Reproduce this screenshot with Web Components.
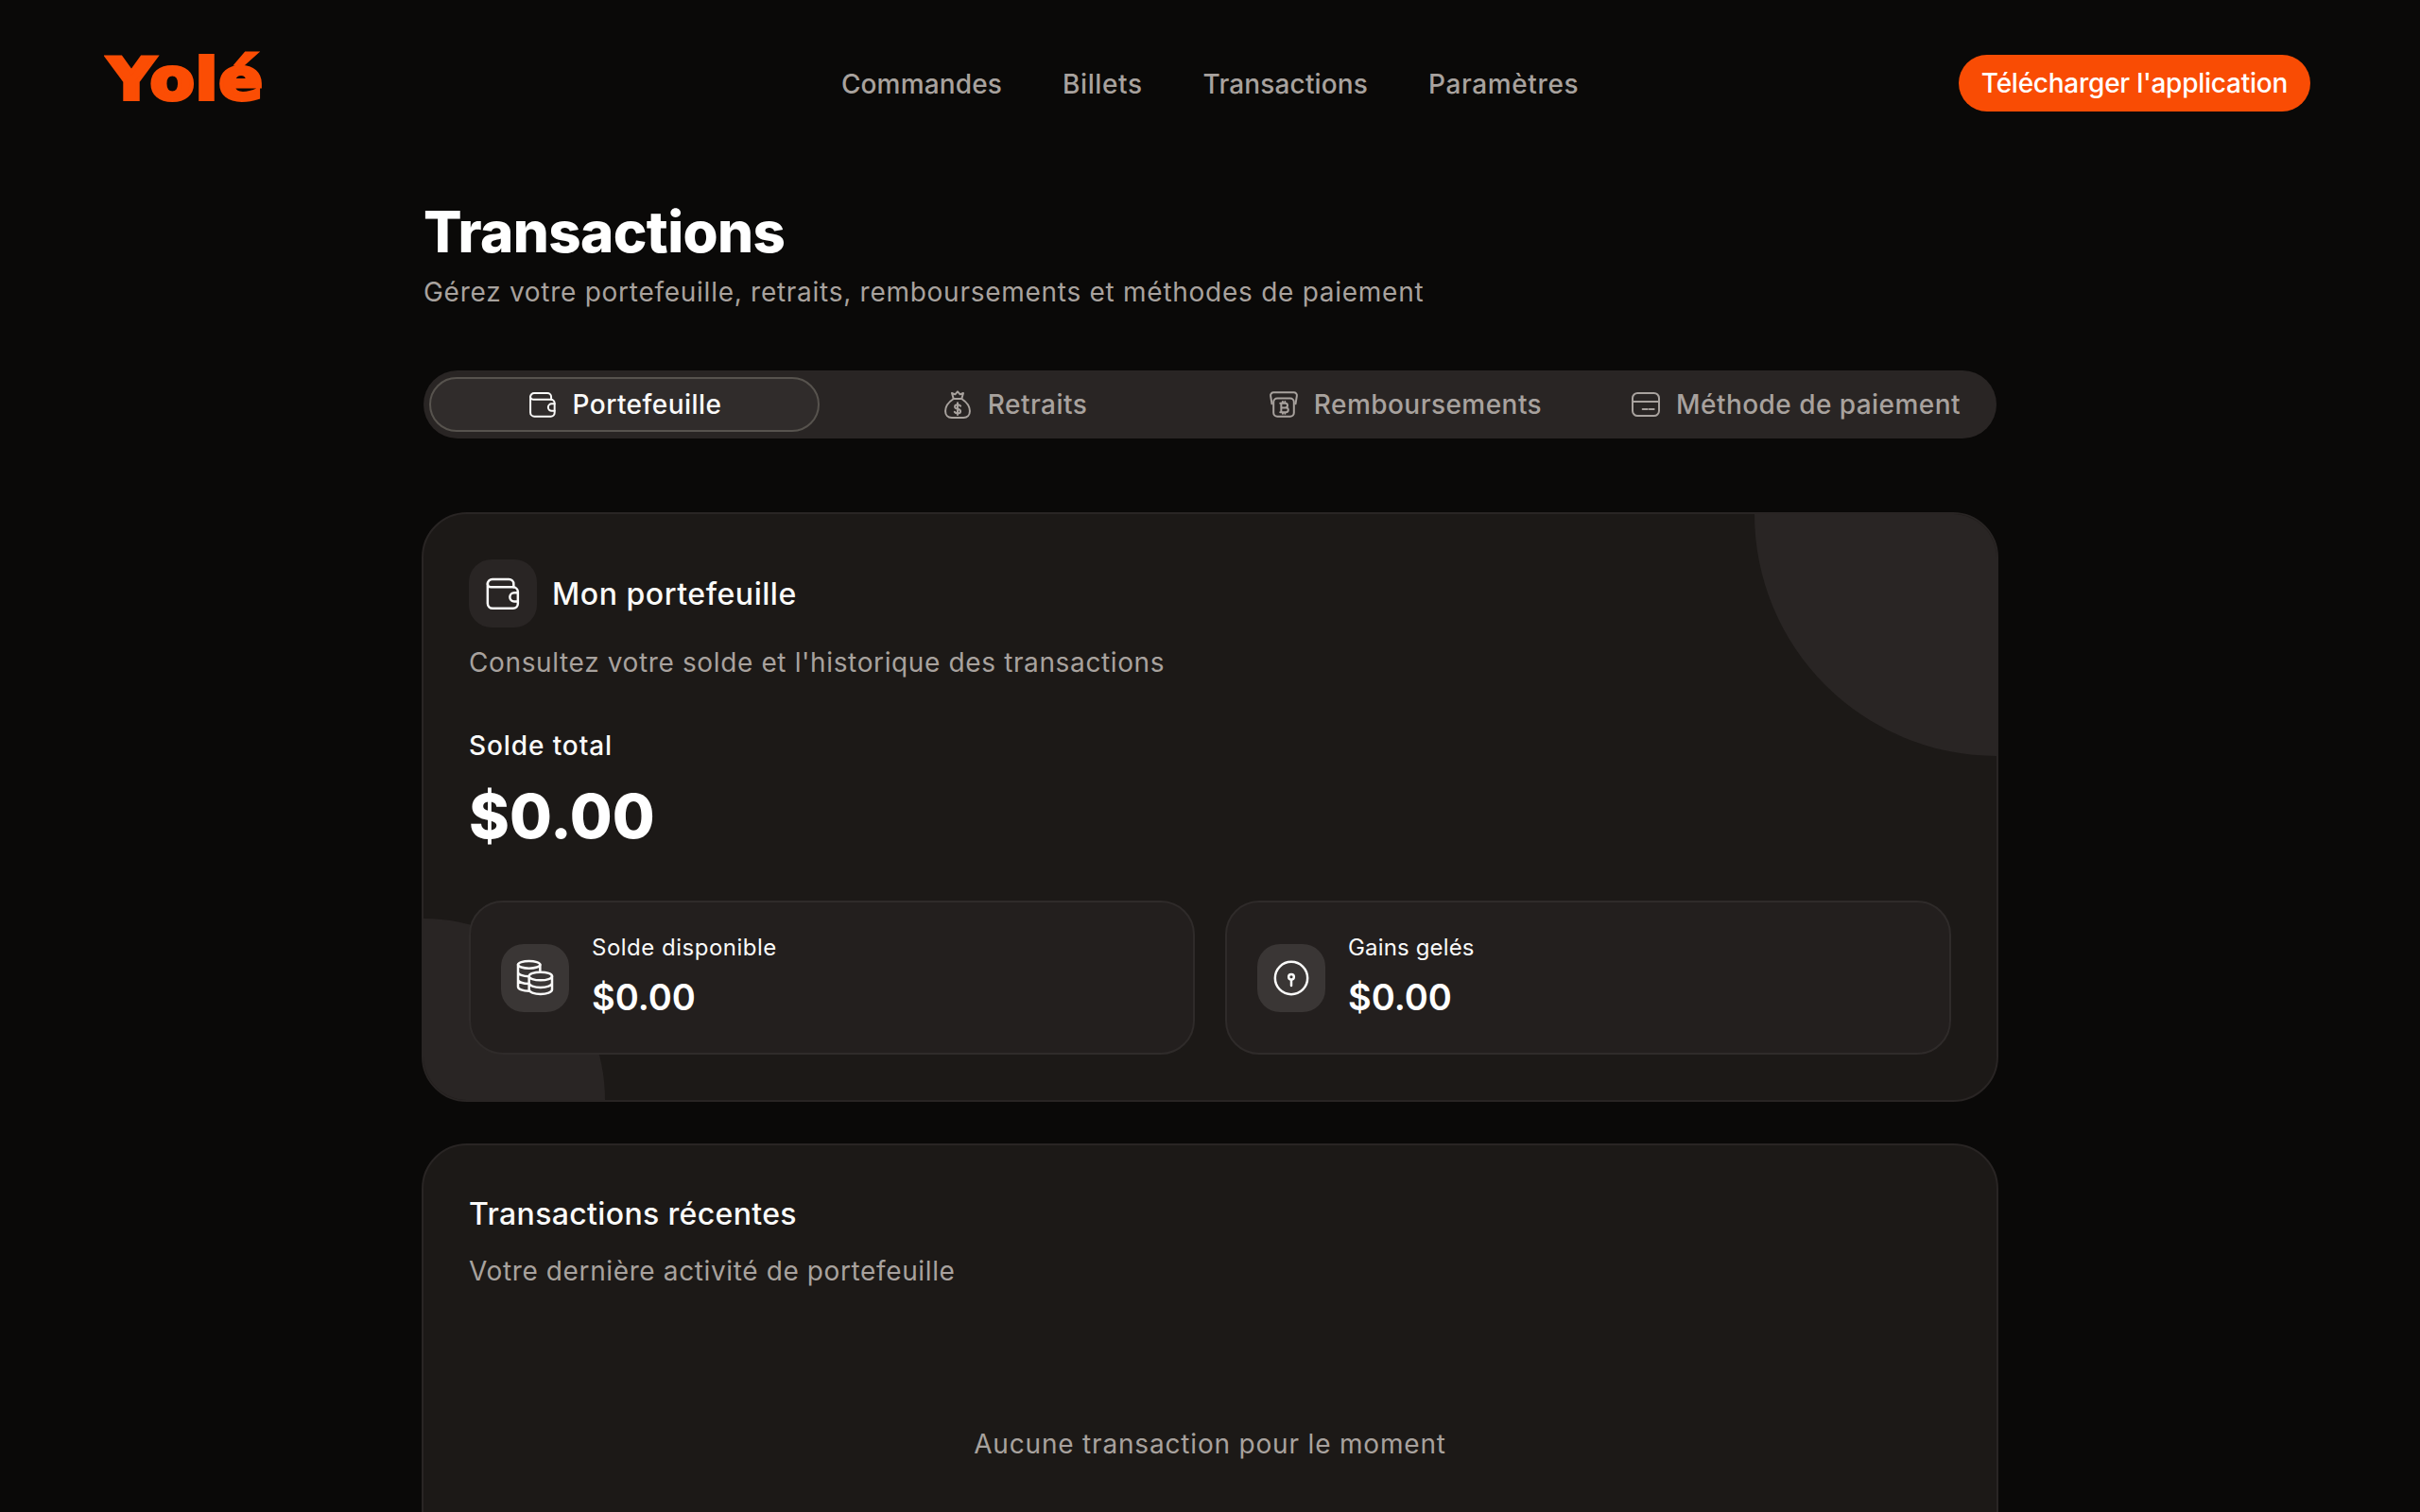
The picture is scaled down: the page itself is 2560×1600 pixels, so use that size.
<!DOCTYPE html>
<html lang="fr"><head><meta charset="utf-8"><title>Transactions</title>
<style>
html,body{margin:0;padding:0;background:#0a0908;height:1600px;overflow:hidden}
body{font-family:Inter,"Noto Sans",sans-serif;color:#fff}
</style></head><body>
<yole-header></yole-header>
<yole-main>
  <yole-heading title="Transactions" sub="Gérez votre portefeuille, retraits, remboursements et méthodes de paiement"></yole-heading>
  <yole-tabs></yole-tabs>
  <yole-wallet></yole-wallet>
  <yole-recent></yole-recent>
</yole-main>
<script>
const ICONS={
wallet:'<path d="M2.300 6a3 3 0 0 1 3-3h10.500a3 3 0 0 1 3 3v2"/><path d="M2.300 6a2.200 2.200 0 0 0 2.200 2h14a3 3 0 0 1 3 3v7.500a3 3 0 0 1-3 3h-13a3.200 3.200 0 0 1-3.200-3.200Z"/><path d="M21.500 11.500h-2.300a2.800 2.800 0 0 0 0 5.600h2.300"/>',
bag:'<path d="M8.800 7.500 7.500 3l2.500 1L12 1.800 14 4l2.500-1-1.300 4.500"/><path d="M8.800 7.500h6.400"/><path d="M8.800 7.500C5 10 2.300 13.500 2.300 17.300c0 3 2 5.200 5 5.200h9.400c3 0 5-2.200 5-5.200 0-3.800-2.700-7.300-6.500-9.800"/><path d="M14.300 13.200c-.5-.8-1.300-1.100-2.300-1.100-1.200 0-2.200.6-2.200 1.700 0 2.400 4.500 1.200 4.500 3.600 0 1.100-1.100 1.700-2.300 1.700-1 0-1.900-.4-2.400-1.200M12 10.700v9.500"/>',
refund:'<path d="M2.600 11.500 1.600 5.200A2.400 2.400 0 0 1 4 2.400h16a2.400 2.400 0 0 1 2.400 2.800l-1 6.300"/><rect x="3.900" y="7.200" width="16.200" height="14.400" rx="3"/><path d="M10 10.800v7.400M9.200 11h4a1.800 1.800 0 0 1 0 3.600h-3.200M10 14.600h3.800a1.800 1.800 0 0 1 0 3.600H9.200M11.200 9.800V11M13 9.800V11M11.200 18.200v1.100M13 18.200v1.100"/>',
card:'<rect x="1.500" y="3" width="21" height="18" rx="4"/><path d="M1.500 9.700h21M9.500 15.700h3.800M14.800 15.700h3.700"/>',
coins:'<ellipse cx="8.200" cy="3.500" rx="7" ry="2.300"/><path d="M15.200 3.500v4M1.200 3.500v14c0 1.600 3.100 2.700 7 2.700M1.200 8.200c0 1.600 3.100 2.700 7 2.700M1.200 12.900c0 1.600 3.100 2.700 7 2.700"/><ellipse cx="15.500" cy="10.800" rx="7.300" ry="2.600"/><path d="M8.200 10.800v8.600c0 1.600 3.300 2.800 7.300 2.800s7.300-1.200 7.300-2.800v-8.600M8.200 15.200c0 1.600 3.300 2.800 7.300 2.800s7.300-1.200 7.300-2.800"/>',
lock:'<circle cx="12" cy="12" r="10.300"/><circle cx="12" cy="11.300" r="1.700"/><path d="M12 13v3.800"/>'
};
function icon(n,s,c,w){return `<svg width="${s}" height="${s}" viewBox="0 0 24 24" fill="none" stroke="${c}" stroke-width="${w||1.5}" stroke-linecap="round" stroke-linejoin="round" aria-hidden="true">${ICONS[n]}</svg>`}
function def(name,fn){customElements.define(name,class extends HTMLElement{connectedCallback(){if(!this.shadowRoot){this.attachShadow({mode:'open'}).innerHTML=fn(this)}}})}
const F='font-family:Inter,"Noto Sans",sans-serif;';
def('yole-header',()=>`<style>
:host{display:grid;grid-template-columns:1fr auto 1fr;align-items:center;height:176px;padding:0 116px 0 112px;box-sizing:border-box;${F}}
.logo{font:700 60px/1 "DejaVu Sans",sans-serif;color:#fb4d04;-webkit-text-stroke:4px #fb4d04;letter-spacing:1px;margin-top:-8px;padding-left:2px;transform:scaleX(1.14);transform-origin:left center}
nav{display:flex;gap:64px;margin:2px 0 0 4px}
a{color:#a8a29e;font-size:28px;font-weight:500;letter-spacing:.15px}
a.w{letter-spacing:.6px}
.b{justify-self:end;height:60px;display:flex;align-items:center;padding:0 24px;border-radius:30px;background:#f94c04;color:#fff;font-size:28px;font-weight:500;letter-spacing:-.25px}
</style><div class="logo">Yolé</div><nav><a>Commandes</a><a class="w">Billets</a><a>Transactions</a><a class="w">Paramètres</a></nav><div class="b">Télécharger l'application</div>`);
def('yole-main',()=>`<style>:host{display:block;width:1664px;margin:0 auto;box-sizing:border-box}</style><slot></slot>`);
def('yole-heading',h=>`<style>:host{display:block;padding-top:33px}
h1{margin:0;font-size:60px;line-height:72px;font-weight:800;color:#fff;letter-spacing:-.6px}
p{margin:8px 0 0;font-size:28px;line-height:40px;color:#a8a29e;letter-spacing:.73px}</style>
<h1>${h.getAttribute('title')}</h1><p>${h.getAttribute('sub')}</p>`);
def('yole-tabs',()=>{const t=[['wallet','Portefeuille',1],['bag','Retraits'],['refund','Remboursements'],['card','Méthode de paiement']];
return `<style>:host{display:grid;grid-template-columns:repeat(4,1fr);height:72px;margin-top:63px;padding:7px 6px;box-sizing:border-box;border-radius:36px;background:#292524}
div{display:flex;align-items:center;justify-content:center;gap:16px;color:#a8a29e;font-size:28px;font-weight:500;letter-spacing:.45px;border-radius:30px;border:2px solid transparent;box-sizing:border-box}
div.a{background:#302c2b;border-color:#57534e;color:#fafaf9}
svg{flex:none}</style>${t.map(x=>`<div class="${x[2]?'a':''}">${icon(x[0],32,x[2]?'#fafaf9':'#a8a29e')}<span>${x[1]}</span></div>`).join('')}`});
def('yole-stat',h=>`<style>:host{flex:1;display:flex;align-items:center;gap:24px;height:163px;padding:0 32px;box-sizing:border-box;border-radius:36px;border:2px solid #2f2b2a;background:#231f1e;position:relative}
.i{width:72px;height:72px;border-radius:24px;background:#3a3635;display:grid;place-items:center;flex:none}
.x{padding-bottom:3px}
.l{font-size:24px;line-height:32px;color:#fafaf9;letter-spacing:${h.getAttribute('ls')}px}
.v{font-size:38px;line-height:48px;font-weight:600;color:#fff;margin-top:12px}</style>
<div class="i">${icon(h.getAttribute('icon'),40,'#fafaf9')}</div><div class="x"><div class="l">${h.getAttribute('label')}</div><div class="v">$0.00</div></div>`);
def('yole-wallet',()=>`<style>:host{display:block;position:relative;overflow:hidden;margin:78px -2px 0;height:624px;padding:48px;box-sizing:border-box;border-radius:48px;border:2px solid #292524;background:#1c1917}
.c1{position:absolute;right:-256px;top:-256px;width:512px;height:512px;border-radius:50%;background:#292524}
.c2{position:absolute;left:-192px;bottom:-192px;width:384px;height:384px;border-radius:50%;background:#292524}
.r{position:relative}
.head{display:flex;align-items:center;gap:16px}
.i{width:72px;height:72px;border-radius:24px;background:#292524;display:grid;place-items:center}
h2{margin:0;font-size:32px;font-weight:500;color:#fafaf9;letter-spacing:.55px}
p{margin:21px 0 0;font-size:28px;line-height:32px;color:#a8a29e;letter-spacing:.63px}
.t{margin-top:52px;font-size:28px;line-height:40px;font-weight:500;color:#fafaf9;letter-spacing:.9px}
.m{font-size:65px;line-height:80px;font-weight:800;color:#fff;margin-top:15px}
.g{display:flex;gap:32px;margin-top:49px}
</style><div class="c1"></div><div class="c2"></div>
<div class="r"><div class="head"><div class="i">${icon('wallet',40,'#fafaf9')}</div><h2>Mon portefeuille</h2></div>
<p>Consultez votre solde et l'historique des transactions</p>
<div class="t">Solde total</div><div class="m">$0.00</div>
<div class="g"><yole-stat icon="coins" label="Solde disponible" ls=".5"></yole-stat><yole-stat icon="lock" label="Gains gelés" ls=".15"></yole-stat></div></div>`);
def('yole-recent',()=>`<style>:host{display:block;margin:44px -2px 0;height:500px;padding:53px 48px 48px;box-sizing:border-box;border-radius:48px;border:2px solid #292524;background:#1c1917}
h2{margin:0;font-size:32px;line-height:40px;font-weight:500;color:#fafaf9;letter-spacing:.35px}
p{margin:24px 0 0;font-size:28px;line-height:32px;color:#a8a29e;letter-spacing:.62px}
.e{margin-top:147px;text-align:center;font-size:28px;line-height:40px;color:#a8a29e;letter-spacing:.82px}</style>
<h2>Transactions récentes</h2><p>Votre dernière activité de portefeuille</p><div class="e">Aucune transaction pour le moment</div>`);
</script></body></html>
